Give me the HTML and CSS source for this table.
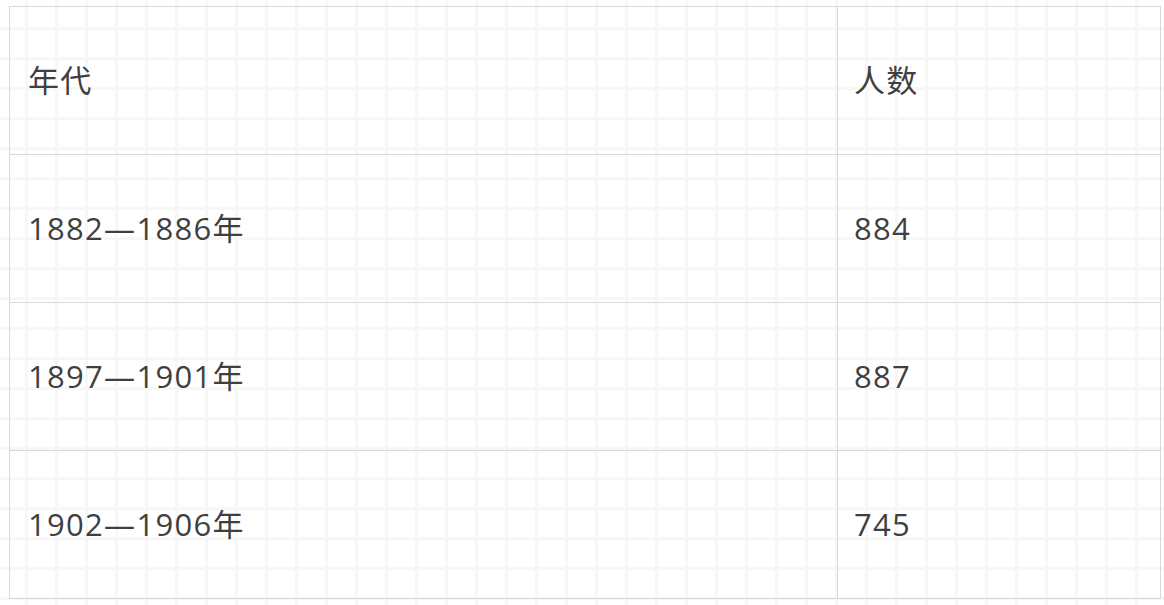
FILE: index.html
```html
<!DOCTYPE html>
<html lang="zh">
<head>
<meta charset="utf-8">
<title>年代与人数</title>
<link rel="stylesheet" href="styles.css">
</head>
<body>
<div class="page">
  <table class="data">
    <colgroup><col class="c1"><col class="c2"></colgroup>
    <tr><td>年代</td><td class="num">人数</td></tr>
    <tr><td>1882—1886年</td><td class="num">884</td></tr>
    <tr><td>1897—1901年</td><td class="num">887</td></tr>
    <tr><td>1902—1906年</td><td class="num">745</td></tr>
  </table>
</div>
</body>
</html>
```
FILE: styles.css
```css
html, body {
  margin: 0;
  padding: 0;
  background-color: #ffffff;
}
body {
  width: 1164px;
  height: 605px;
  overflow: hidden;
  background-image:
    repeating-linear-gradient(to right, transparent 0, transparent 25px, #f7f7f7 25px, #f7f7f7 28px, transparent 28px, transparent 30px),
    repeating-linear-gradient(to bottom, transparent 0, transparent 27px, #f7f7f7 27px, #f7f7f7 30px);
  font-family: "Open Sans", "Noto Sans CJK SC", sans-serif;
}
.page {
  padding: 6px 0 0 9px;
}
.data {
  border-collapse: collapse;
  width: 1151px;
  table-layout: fixed;
}
.c1 { width: 828px; }
.c2 { width: 323px; }
.data td {
  border: 1px solid #d9d9d9;
  height: 148px;
  padding: 0 0 0 18px;
  box-sizing: border-box;
  font-size: 31px;
  color: #3f3f3f;
  vertical-align: middle;
  line-height: 1;
  letter-spacing: 1.3px;
}
.data td.num {
  padding-left: 16px;
}
```
